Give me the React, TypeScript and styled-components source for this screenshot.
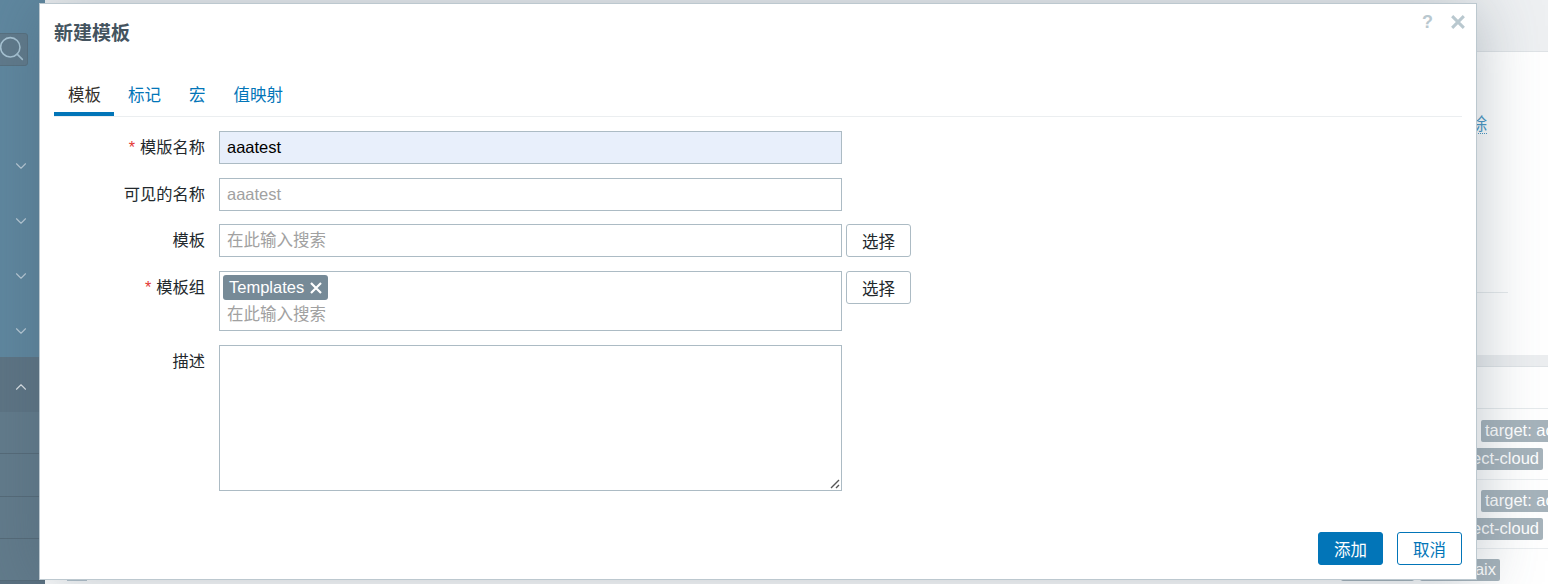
import React from "react"
import styled, { createGlobalStyle } from "styled-components"
import { ChevronDown, ChevronUp, Search } from "lucide-react"

const GlobalStyle = createGlobalStyle`
    html, body {
        margin: 0;
        padding: 0;
        height: 100%;
        overflow: hidden;
        background: #fff;
        font-family: "Liberation Sans", "Noto Sans CJK SC", sans-serif;
        font-size: 16.5px;
    }
`

const Page = styled.div`
    position: relative;
    display: flex;
    width: 1548px;
    height: 584px;
    overflow: hidden;
`

const Sidebar = styled.aside`
    width: 45px;
    flex: none;
    display: flex;
    flex-direction: column;
    background: #5f879f;
`

const SearchBox = styled.div`
    margin: 33px 0 0 -10px;
    width: 38px;
    height: 33px;
    flex: none;
    box-sizing: border-box;
    border-radius: 3px;
    border: 1px solid #57707f;
    background: #607a8b;
    display: flex;
    align-items: center;
    justify-content: flex-end;
    padding: 0 1px 3px 0;
    color: #a9c5d5;
`

const NavItem = styled.div`
    height: 55px;
    flex: none;
    display: flex;
    align-items: center;
    justify-content: center;
    padding-right: 3px;
    color: #bccdd8;
`

const NavFirst = styled(NavItem)`
    margin-top: 72px;
`

const NavOpen = styled(NavItem)`
    margin-top: -1px;
    box-sizing: border-box;
    padding-top: 4px;
    background: #5d7484;
    color: #dfe5e9;
`

const SubItem = styled.div<{ $height: number }>`
    height: ${p => p.$height}px;
    flex: none;
    box-sizing: border-box;
    background: #627b8b;
    border-bottom: 1px solid #556a78;
`

const SideEnd = styled.div`
    flex: 1;
    background: #5a7080;
`

const Main = styled.main`
    flex: 1;
    min-width: 0;
    display: flex;
    flex-direction: column;
    background: #fff;
`

const TopBar = styled.div`
    height: 52px;
    flex: none;
    box-sizing: border-box;
    background: #eef0f2;
    border-bottom: 1px solid #dfe3e6;
`

const Filter = styled.section`
    height: 303px;
    flex: none;
    box-sizing: border-box;
    padding: 63px 0 0;
    display: flex;
    flex-direction: column;
    align-items: flex-end;
`

const DeleteLink = styled.span`
    margin-right: 61px;
    line-height: 18px;
    color: #4796c4;
    border-bottom: 1px dotted #4796c4;
`

const FilterRule = styled.div`
    width: 1000px;
    height: 1px;
    margin: 158px 40px 0 0;
    background: #e6eaec;
`

const Gap = styled.div`
    height: 12px;
    flex: none;
    box-sizing: border-box;
    background: #eceef0;
    border-bottom: 1px solid #dfe3e6;
`

const TableHead = styled.div`
    height: 42px;
    flex: none;
    box-sizing: border-box;
    border-bottom: 1px solid #e6eaec;
`

const TableRow = styled.div<{ $height: number; $top: number }>`
    height: ${p => p.$height}px;
    flex: none;
    box-sizing: border-box;
    padding-top: ${p => p.$top}px;
    border-bottom: 1px solid #ebeef0;
    display: flex;
    flex-direction: column;
    gap: 6px;
`

const LastRow = styled.div`
    flex: 1;
    box-sizing: border-box;
    padding: 10px 48px 0 22px;
    display: flex;
    gap: 6px;
`

const TagStart = styled.div`
    display: flex;
    padding-left: 1436px;
`

const TagEnd = styled.div`
    display: flex;
    justify-content: flex-end;
    padding-right: 5px;
`

const BgTag = styled.span`
    height: 22px;
    flex: none;
    box-sizing: border-box;
    padding: 0 4px;
    border-radius: 2px;
    background: #a6b3bb;
    color: #fff;
    line-height: 21px;
    white-space: nowrap;
`

const RowCheck = styled.span`
    width: 20px;
    height: 22px;
    margin-right: auto;
    background: #b8c6cf;
`

const Dialog = styled.div`
    position: absolute;
    left: 39px;
    top: 3px;
    width: 1438px;
    height: 577px;
    box-sizing: border-box;
    display: flex;
    flex-direction: column;
    padding: 0 14px;
    background: #fff;
    border: 1px solid #bcc8cf;
    box-shadow: 0 2px 60px rgba(70, 90, 105, 0.36);
`

const DialogTitle = styled.h4`
    margin: 0;
    padding-top: 18px;
    height: 53px;
    box-sizing: border-box;
    font-size: 19px;
    line-height: 24px;
    font-weight: 700;
    color: #44545f;
`

const HeaderIcons = styled.div`
    position: absolute;
    top: 10px;
    right: 11px;
    display: flex;
    align-items: center;
    gap: 18px;
    color: #b9c8cf;
`

const Help = styled.span`
    font-size: 18px;
    font-weight: 700;
    line-height: 16px;
`

const Tabs = styled.div`
    margin-top: 22px;
    display: flex;
    height: 37px;
    flex: none;
    border-bottom: 1px solid #ebeef0;
`

const Tab = styled.div<{ $active?: boolean }>`
    box-sizing: border-box;
    height: 37px;
    padding: 5px ${p => (p.$active ? 13 : 14)}px 0 14px;
    line-height: 22px;
    color: ${p => (p.$active ? "#34302c" : "#0275b8")};
    border-bottom: ${p => (p.$active ? "4px solid #0275b8" : "none")};
`

const Form = styled.div`
    margin-top: 14px;
    display: flex;
    flex-direction: column;
    gap: 14px;
`

const Row = styled.div`
    display: grid;
    grid-template-columns: 165px 623px auto;
    align-items: start;
`

const TightRow = styled(Row)`
    margin-top: -1px;
`

const Label = styled.label`
    text-align: right;
    font-size: 16.25px;
    line-height: 22px;
    padding: 5px 14px 0 0;
    color: #22282c;
    white-space: nowrap;
`

const Star = styled.span`
    color: #e33734;
    margin-right: 5px;
`

const Field = styled.div<{ $filled?: boolean; $placeholder?: boolean }>`
    box-sizing: border-box;
    height: 33px;
    padding: 0 7px;
    border: 1px solid #acbbc4;
    line-height: 31px;
    background: ${p => (p.$filled ? "#e8effb" : "#fff")};
    color: ${p => (p.$placeholder ? "#a1a1a1" : "#000")};
`

const MultiField = styled.div`
    box-sizing: border-box;
    height: 60px;
    padding: 3px;
    border: 1px solid #acbbc4;
    background: #fff;
`

const Chip = styled.span`
    display: flex;
    width: fit-content;
    align-items: center;
    gap: 6px;
    height: 25px;
    padding: 0 6px;
    border-radius: 3px;
    background: #768a97;
    color: #fff;
`

const MultiPlaceholder = styled.div`
    margin-top: 1px;
    padding: 0 4px;
    line-height: 26px;
    color: #a1a1a1;
`

const TextArea = styled.div`
    position: relative;
    box-sizing: border-box;
    height: 146px;
    border: 1px solid #acbbc4;
    background: #fff;
`

const Grip = styled.svg`
    position: absolute;
    right: 1px;
    bottom: 1px;
`

const PickButton = styled.button`
    box-sizing: border-box;
    width: 65px;
    height: 33px;
    margin-left: 4px;
    padding: 0;
    border: 1px solid #acbbc4;
    border-radius: 3px;
    background: #fff;
    color: #22282c;
    font: inherit;
`

const Footer = styled.div`
    margin-top: auto;
    margin-bottom: 14px;
    display: flex;
    justify-content: flex-end;
    gap: 14px;
`

const Primary = styled.button`
    box-sizing: border-box;
    width: 65px;
    height: 33px;
    padding: 0;
    border: 1px solid #0275b8;
    border-radius: 3px;
    background: #0275b8;
    color: #fff;
    font: inherit;
`

const Secondary = styled(Primary)`
    background: #fff;
    color: #0275b8;
`

const Cross = ({ size, weight }: { size: number; weight: number }) => (
    <svg width={size} height={size} viewBox="0 0 12 12">
        <path d="M1 1 L11 11 M11 1 L1 11" stroke="currentColor" strokeWidth={weight} fill="none" />
    </svg>
)

export default function App() {
    return (
        <Page>
            <GlobalStyle />
            <Sidebar>
                <SearchBox>
                    <Search size={29} strokeWidth={1.3} />
                </SearchBox>
                <NavFirst>
                    <ChevronDown size={18} strokeWidth={1.5} />
                </NavFirst>
                <NavItem>
                    <ChevronDown size={18} strokeWidth={1.5} />
                </NavItem>
                <NavItem>
                    <ChevronDown size={18} strokeWidth={1.5} />
                </NavItem>
                <NavItem>
                    <ChevronDown size={18} strokeWidth={1.5} />
                </NavItem>
                <NavOpen>
                    <ChevronUp size={18} strokeWidth={1.5} />
                </NavOpen>
                <SubItem $height={42} />
                <SubItem $height={43} />
                <SubItem $height={42} />
                <SubItem $height={42} />
                <SideEnd />
            </Sidebar>
            <Main>
                <TopBar />
                <Filter>
                    <DeleteLink>除</DeleteLink>
                    <FilterRule />
                </Filter>
                <Gap />
                <TableHead />
                <TableRow $height={71} $top={11}>
                    <TagStart>
                        <BgTag>target: actions</BgTag>
                    </TagStart>
                    <TagEnd>
                        <BgTag>zabbix-direct-cloud</BgTag>
                    </TagEnd>
                </TableRow>
                <TableRow $height={69} $top={10}>
                    <TagStart>
                        <BgTag>target: actions</BgTag>
                    </TagStart>
                    <TagEnd>
                        <BgTag>zabbix-direct-cloud</BgTag>
                    </TagEnd>
                </TableRow>
                <LastRow>
                    <RowCheck />
                    <BgTag>class: os</BgTag>
                    <BgTag>target: aix</BgTag>
                </LastRow>
            </Main>
            <Dialog>
                <DialogTitle>新建模板</DialogTitle>
                <HeaderIcons>
                    <Help>?</Help>
                    <Cross size={14} weight={2.6} />
                </HeaderIcons>
                <Tabs>
                    <Tab $active>模板</Tab>
                    <Tab>标记</Tab>
                    <Tab>宏</Tab>
                    <Tab>值映射</Tab>
                </Tabs>
                <Form>
                    <Row>
                        <Label>
                            <Star>*</Star>模版名称
                        </Label>
                        <Field $filled>aaatest</Field>
                    </Row>
                    <Row>
                        <Label>可见的名称</Label>
                        <Field $placeholder>aaatest</Field>
                    </Row>
                    <TightRow>
                        <Label>模板</Label>
                        <Field $placeholder>在此输入搜索</Field>
                        <PickButton>选择</PickButton>
                    </TightRow>
                    <Row>
                        <Label>
                            <Star>*</Star>模板组
                        </Label>
                        <MultiField>
                            <Chip>
                                Templates
                                <Cross size={12} weight={2.2} />
                            </Chip>
                            <MultiPlaceholder>在此输入搜索</MultiPlaceholder>
                        </MultiField>
                        <PickButton>选择</PickButton>
                    </Row>
                    <Row>
                        <Label>描述</Label>
                        <TextArea>
                            <Grip width="11" height="11" viewBox="0 0 11 11">
                                <path d="M10 2 L2 10 M10 7 L7 10" stroke="#555" strokeWidth="1.4" fill="none" />
                            </Grip>
                        </TextArea>
                    </Row>
                </Form>
                <Footer>
                    <Primary>添加</Primary>
                    <Secondary>取消</Secondary>
                </Footer>
            </Dialog>
        </Page>
    )
}
